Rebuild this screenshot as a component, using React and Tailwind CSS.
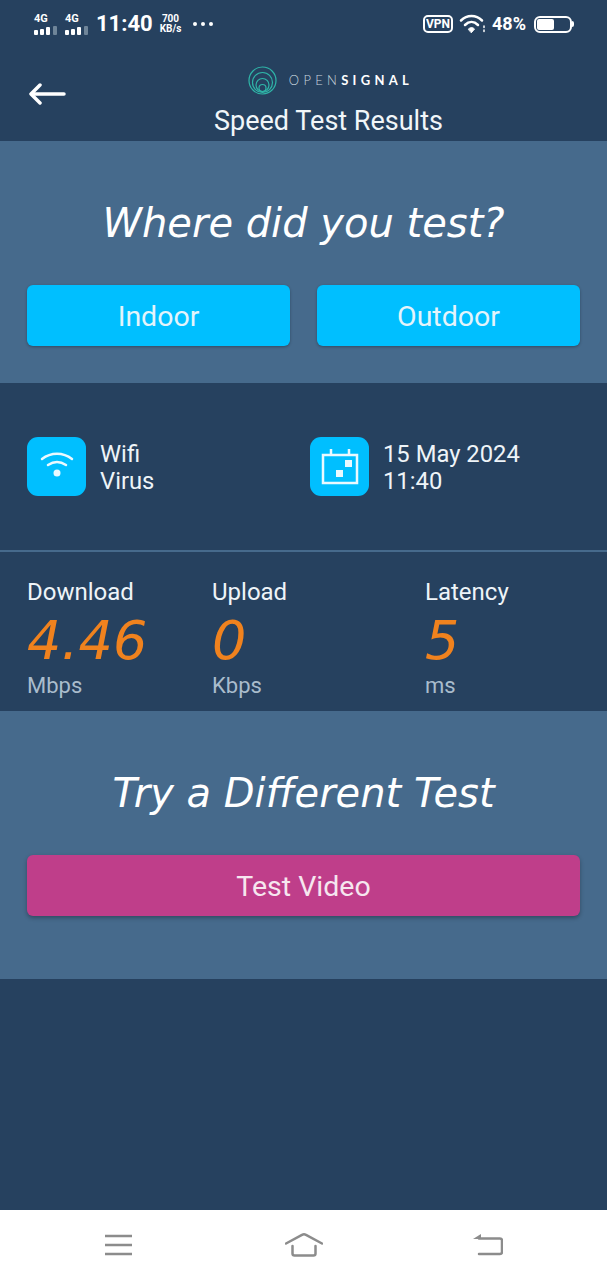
import React from "react";

const sans = "font-['Roboto',sans-serif]";
const display = "font-['DejaVu_Sans',sans-serif]";

function SignalBars() {
  return (
    <svg width="24" height="9" viewBox="0 0 24 9">
      <rect x="0" y="4" width="4" height="5" rx="1" fill="#fff" />
      <rect x="6" y="3" width="4" height="6" rx="1" fill="#fff" />
      <rect x="12" y="1" width="4" height="8" rx="1" fill="#fff" />
      <rect x="19" y="0" width="4" height="9" rx="1" fill="#6f8599" />
    </svg>
  );
}

function Network() {
  return (
    <div className="flex flex-col items-start gap-[2px]">
      <span className="text-[11px] leading-[10px] font-bold text-white">4G</span>
      <SignalBars />
    </div>
  );
}

function StatusBar() {
  return (
    <div className="flex items-center h-[48px] pl-[34px] pr-[33px] text-white">
      <Network />
      <div className="ml-[7px]">
        <Network />
      </div>
      <span className="ml-[7px] text-[22px] leading-none font-bold">11:40</span>
      <div className="ml-[7px] flex flex-col items-center text-[10px] leading-[10px] font-bold">
        <span>700</span>
        <span>KB/s</span>
      </div>
      <span className="ml-[12px] flex gap-[4px]">
        <i className="w-[4px] h-[4px] rounded-full bg-white" />
        <i className="w-[4px] h-[4px] rounded-full bg-white" />
        <i className="w-[4px] h-[4px] rounded-full bg-white" />
      </span>
      <div className="ml-auto flex items-center">
        <span className="border-2 border-white rounded-[5px] text-[12px] leading-[14px] font-bold px-[1px]">VPN</span>
        <svg className="ml-[6px]" width="27" height="20" viewBox="0 0 27 20" fill="none" stroke="#fff" strokeLinecap="round">
          <path d="M2 6.500c6-6 15-6 21 0" strokeWidth="2.500" />
          <path d="M6 11c4-4 9-4 13 0" strokeWidth="2.500" />
          <path d="M9.500 15c2-2 4-2 6 0l-3 3.500z" fill="#fff" strokeWidth="1" />
          <path d="M25 12v1.500M25 16v1.500" strokeWidth="1.500" />
        </svg>
        <span className="ml-[6px] text-[18px] leading-none font-bold">48%</span>
        <div className="ml-[8px] flex items-center">
          <div className="w-[38px] h-[17px] border-2 border-white rounded-[6px] p-[1px]">
            <div className="w-[17px] h-full bg-white rounded-[2px]" />
          </div>
          <div className="w-[2px] h-[6px] bg-white rounded-r-sm" />
        </div>
      </div>
    </div>
  );
}

function Logo() {
  return (
    <div className="flex items-center justify-center gap-[12px]">
      <svg width="29" height="29" viewBox="0 0 29 29" fill="none" stroke="#2fb5a8" strokeWidth="1.200">
        <circle cx="14.500" cy="14.500" r="13.500" />
        <circle cx="14.500" cy="16.500" r="10" />
        <circle cx="14.500" cy="19" r="6.500" />
        <circle cx="14.500" cy="22" r="3.500" />
      </svg>
      <span className="text-[13px] leading-none tracking-[4.300px] text-[#c9d6df] font-['Lato',sans-serif] font-light">
        OPEN<span className="font-bold text-white">SIGNAL</span>
      </span>
    </div>
  );
}

function Header() {
  return (
    <header className="relative h-[93px] text-center">
      {/* back arrow, thin head with a long shaft */}
      <svg className="absolute left-[29px] top-[34px]" width="37" height="24" viewBox="0 0 37 24" fill="none" stroke="#fff" strokeWidth="3.500" strokeLinecap="round" strokeLinejoin="round">
        <path d="M35 12H3" />
        <path d="M11 3l-9 9 9 9" />
      </svg>
      <div className="pt-[18px] pl-[54px]">
        <Logo />
      </div>
      <h1 className="mt-[9px] pl-[50px] text-[27px] leading-[34px] text-[#f1f6f9] font-normal">Speed Test Results</h1>
    </header>
  );
}

function ActionButton({ label }) {
  return (
    <button className="h-[61px] pt-[4px] rounded-[6px] bg-[#00bfff] text-[28.500px] text-[#e4f4fb] shadow-[0_1px_3px_rgba(0,0,0,0.3)]">
      {label}
    </button>
  );
}

function TileIcon({ children }) {
  return (
    <div className="w-[59px] h-[59px] rounded-[11px] bg-[#00bfff] flex items-center justify-center">
      {children}
    </div>
  );
}

function Metric({ label, value, unit, className }) {
  return (
    <div className={className}>
      <div className="text-[24px] leading-[28px] text-[#eef4f8]">{label}</div>
      <div className={`${display} italic mt-[4px] text-[54px] leading-[62px] text-[#f0821e]`}>{value}</div>
      <div className="text-[22px] leading-[28px] text-[#a9bccc]">{unit}</div>
    </div>
  );
}

export default function App() {
  return (
    <div className={`${sans} w-[607px] h-[1280px] bg-[#26415f] flex flex-col overflow-hidden`}>
      <StatusBar />
      <Header />

      <section className="h-[242px] bg-[#466a8c] px-[27px] pt-[57px]">
        <h2 className={`${display} italic text-center text-[40px] leading-[50px] text-white`}>Where did you test?</h2>
        <div className="mt-[37px] grid grid-cols-2 gap-[27px]">
          <ActionButton label="Indoor" />
          <ActionButton label="Outdoor" />
        </div>
      </section>

      <section className="h-[169px] border-b-2 border-[#466a8c] px-[27px] pt-[54px] flex">
        <div className="flex gap-[14px] w-[283px]">
          <TileIcon>
            <svg width="36" height="30" viewBox="0 0 36 30" fill="none" stroke="#eaf9ff" strokeWidth="2.500" strokeLinecap="round">
              <path d="M3 7c9-7 21-7 30 0" />
              <path d="M9 13c6-4 12-4 18 0" />
              <circle cx="18" cy="21" r="3.500" fill="#eaf9ff" stroke="none" />
            </svg>
          </TileIcon>
          <div className="text-[23.800px] leading-[27px] text-[#eef4f8] pt-[4px]">
            <div>Wifi</div>
            <div>Virus</div>
          </div>
        </div>
        <div className="flex gap-[14px]">
          <TileIcon>
            <svg width="38" height="38" viewBox="0 0 38 38" fill="none" stroke="#eaf9ff" strokeWidth="2.500">
              <path d="M2 7h34v28H2z" />
              <path d="M10 1v6M28 1v6" />
              <rect x="24" y="12" width="7" height="7" fill="#eaf9ff" stroke="none" />
              <rect x="15" y="22" width="7" height="7" fill="#eaf9ff" stroke="none" />
            </svg>
          </TileIcon>
          <div className="text-[23.800px] leading-[27px] text-[#eef4f8] pt-[4px]">
            <div>15 May 2024</div>
            <div>11:40</div>
          </div>
        </div>
      </section>

      <section className="h-[159px] px-[27px] pt-[26px] flex">
        <Metric label="Download" value="4.46" unit="Mbps" className="w-[185px]" />
        <Metric label="Upload" value="0" unit="Kbps" className="w-[213px]" />
        <Metric label="Latency" value="5" unit="ms" />
      </section>

      <section className="h-[268px] bg-[#466a8c] px-[27px] pt-[57px]">
        <h2 className={`${display} italic text-center text-[40px] leading-[50px] text-white`}>Try a Different Test</h2>
        <button className="mt-[37px] w-full h-[61px] pt-[4px] rounded-[6px] bg-[#bf3e8a] text-[28.500px] text-[#f6e6ef] shadow-[0_2px_4px_rgba(0,0,0,0.3)]">
          Test Video
        </button>
      </section>

      <div className="flex-1" />

      <nav className="h-[70px] bg-white flex items-center justify-between px-[104px] text-[#8c8c8c]">
        <svg width="30" height="22" viewBox="0 0 30 22" stroke="currentColor" strokeWidth="2.500">
          <path d="M1 2h27M1 11h27M1 20h27" />
        </svg>
        <svg width="38" height="24" viewBox="0 0 38 24" fill="none" stroke="currentColor" strokeWidth="2.500" strokeLinecap="round" strokeLinejoin="round">
          <path d="M1 10.500 17 1.800c1.500-.7 2.500-.7 4 0L37 10.500" />
          <path d="M7.500 13v7.500q0 2 2 2h19q2 0 2-2V13" />
        </svg>
        <svg width="30" height="22" viewBox="0 0 30 22" fill="none" stroke="currentColor" strokeWidth="2.500" strokeLinecap="round">
          <path d="M6 4.500h21q2 0 2 2V18q0 2-2 2H6" />
          <path d="M0 5 8 0v5z" fill="currentColor" stroke="none" />
        </svg>
      </nav>
    </div>
  );
}
